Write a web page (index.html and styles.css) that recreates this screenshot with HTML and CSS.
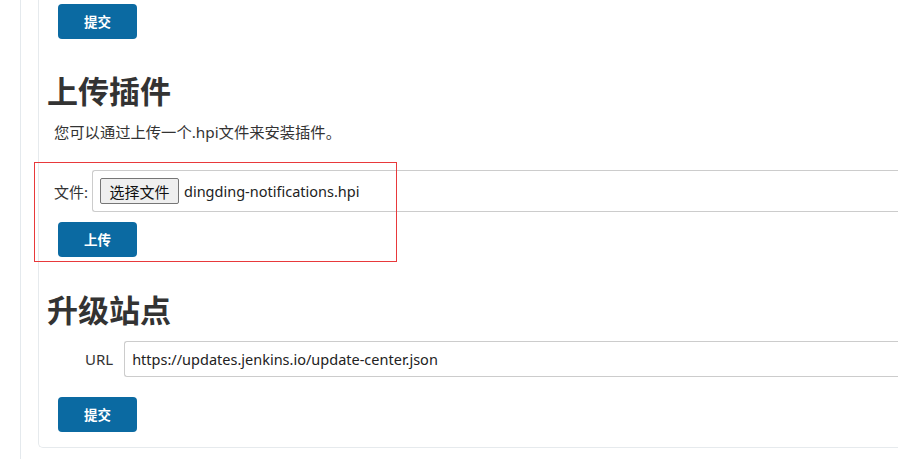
FILE: index.html
```html
<!DOCTYPE html>
<html lang="zh-CN">
<head>
<meta charset="utf-8">
<title>上传插件</title>
<link rel="stylesheet" href="styles.css">
</head>
<body>
<div class="page">
  <div class="card">
    <button class="btn">提交</button>

    <h2 class="title title-upload">上传插件</h2>
    <p class="desc">您可以通过上传一个.hpi文件来安装插件。</p>

    <div class="upload-form">
      <div class="file-row">
        <span class="label">文件:</span>
        <div class="field file-field">
          <span class="choose">选择文件</span>
          <span class="filename">dingding-notifications.hpi</span>
        </div>
      </div>
      <button class="btn btn-upload">上传</button>
      <div class="highlight"></div>
    </div>

    <h2 class="title title-site">升级站点</h2>
    <div class="url-row">
      <span class="label url-label">URL</span>
      <div class="field url-field">https://updates.jenkins.io/update-center.json</div>
    </div>
    <button class="btn btn-submit">提交</button>
  </div>
</div>
</body>
</html>
```

FILE: styles.css
```css
html, body {
  margin: 0;
  padding: 0;
  background: #ffffff;
  overflow: hidden;
  height: 100%;
}

body {
  font-family: "Noto Sans", "Noto Sans CJK SC", sans-serif;
  color: #333333;
}

.page {
  margin-left: 20px;
  border-left: 1px solid #e4e9ed;
  min-height: 100%;
  box-sizing: border-box;
  padding-left: 17px;
}

.card {
  border: 1px solid #e6eaed;
  border-top: 0;
  border-right: 0;
  border-radius: 0 0 0 5px;
  padding: 4px 0 15px 8px;
  display: flex;
  flex-direction: column;
  align-items: flex-start;
}

.btn {
  width: 79px;
  height: 35px;
  margin-left: 11px;
  background: #0b6aa2;
  color: #ffffff;
  border: 0;
  border-radius: 4px;
  font-family: "Noto Sans CJK SC", sans-serif;
  font-weight: 700;
  font-size: 13.5px;
  padding: 0;
  line-height: 35px;
}

.title {
  margin: 32px 0 0 0;
  font-family: "Noto Sans CJK SC", sans-serif;
  font-weight: 700;
  font-size: 31px;
  line-height: 38px;
  color: #333333;
}

.title-site {
  margin-top: 33px;
}

.desc {
  margin: 13px 0 0 7px;
  font-family: "Noto Sans", "Noto Sans CJK SC", sans-serif;
  font-size: 15.3px;
  line-height: 20px;
  color: #333333;
}

.upload-form {
  position: relative;
  margin-top: 28px;
  align-self: stretch;
  display: flex;
  flex-direction: column;
  align-items: flex-start;
}

.file-row {
  display: flex;
  align-items: center;
  align-self: stretch;
  padding-left: 7px;
}

.label {
  font-size: 15px;
  color: #333333;
  width: 38px;
  flex: none;
}

.field {
  flex: 1;
  box-sizing: border-box;
  border: 1px solid #cccccc;
  border-right: 0;
  border-radius: 3px 0 0 3px;
  background: #ffffff;
}

.file-field {
  display: flex;
  align-items: center;
  padding: 7px 7px;
  height: 42px;
}

.choose {
  box-sizing: border-box;
  height: 26px;
  width: 79px;
  display: flex;
  align-items: center;
  justify-content: center;
  background: #efefef;
  border: 1px solid #767676;
  border-radius: 2px;
  font-size: 15px;
  color: #111111;
  flex: none;
}

.filename {
  margin-left: 5px;
  font-size: 14.5px;
  color: #222222;
}

.btn-upload {
  margin-top: 10px;
}

.highlight {
  position: absolute;
  left: -13px;
  top: -8px;
  width: 363px;
  height: 100px;
  box-sizing: border-box;
  border: 1px solid #e8393b;
  pointer-events: none;
}

.url-row {
  margin-top: 13px;
  display: flex;
  align-items: center;
  align-self: stretch;
  padding-left: 38px;
}

.url-label {
  width: auto;
  margin-right: 11px;
}

.url-field {
  height: 36px;
  padding: 0 7px;
  line-height: 34px;
  font-size: 14.5px;
  color: #222222;
}

.btn-submit {
  margin-top: 20px;
}
```
